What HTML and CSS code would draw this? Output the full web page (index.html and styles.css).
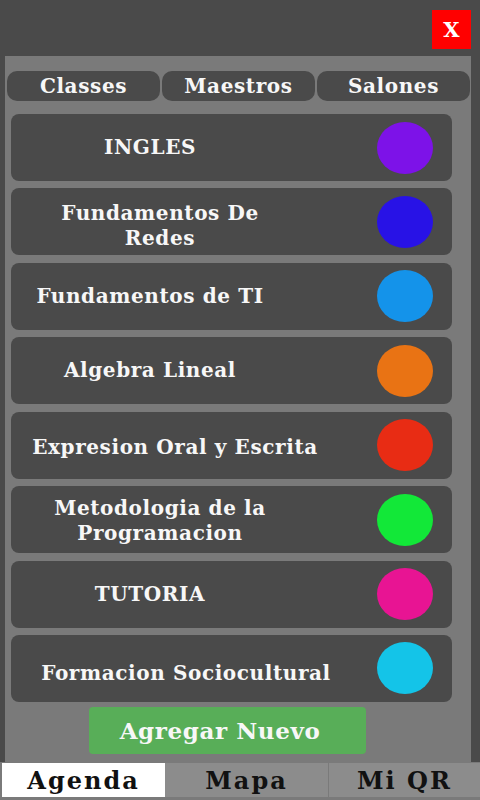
FILE: index.html
```html
<!DOCTYPE html>
<html>
<head>
<meta charset="utf-8">
<link rel="stylesheet" href="styles.css">
</head>
<body>
<div class="app">
  <div class="topbar">
    <div class="close">X</div>
  </div>
  <div class="panel">
    <div class="tabs">
      <div class="tab">Classes</div>
      <div class="tab">Maestros</div>
      <div class="tab">Salones</div>
    </div>
    <div class="list">
      <div class="row"><div class="label">INGLES</div><div class="dot" style="background:#7d12e8"></div></div>
      <div class="row"><div class="label label-2l label-low">Fundamentos De<br>Redes</div><div class="dot" style="background:#2812e6"></div></div>
      <div class="row"><div class="label">Fundamentos de TI</div><div class="dot" style="background:#1493ea"></div></div>
      <div class="row"><div class="label">Algebra Lineal</div><div class="dot" style="background:#e97314"></div></div>
      <div class="row"><div class="label label-wide1">Expresion Oral y Escrita</div><div class="dot" style="background:#e82c14"></div></div>
      <div class="row"><div class="label label-2l">Metodologia de la<br>Programacion</div><div class="dot" style="background:#12e838"></div></div>
      <div class="row"><div class="label">TUTORIA</div><div class="dot" style="background:#e81493"></div></div>
      <div class="row"><div class="label label-wide2">Formacion Sociocultural</div><div class="dot" style="background:#14c4e8"></div></div>
    </div>
    <div class="addwrap"><div class="add">Agregar Nuevo</div></div>
  </div>
  <div class="nav">
    <div class="navitem active">Agenda</div>
    <div class="navitem">Mapa</div>
    <div class="navitem">Mi QR</div>
  </div>
</div>
</body>
</html>
```
FILE: styles.css
```css
html, body {
  margin: 0;
  padding: 0;
  background: #4a4a4a;
}
body {
  font-family: "DejaVu Serif", "Liberation Serif", serif;
  font-weight: bold;
  color: #f7f7f7;
}
.app {
  width: 480px;
  height: 800px;
  display: flex;
  flex-direction: column;
}
.topbar {
  height: 56px;
  display: flex;
  justify-content: flex-end;
  align-items: flex-start;
  padding-right: 9px;
  box-sizing: border-box;
}
.close {
  margin-top: 10px;
  width: 39px;
  height: 39px;
  background: #ff0000;
  color: #fff;
  font-size: 21px;
  display: flex;
  align-items: center;
  justify-content: center;
}
.panel {
  margin-left: 5px;
  width: 466px;
  height: 706px;
  background: #7a7a7a;
  box-sizing: border-box;
  padding-top: 15px;
  display: flex;
  flex-direction: column;
}
.tabs {
  display: flex;
  gap: 2px;
  padding: 0 1px 0 2px;
  height: 30px;
}
.tab {
  flex: 1;
  background: #4a4a4a;
  border-radius: 10px;
  font-size: 20px;
  letter-spacing: 0.6px;
  display: flex;
  align-items: center;
  justify-content: center;
}
.list {
  margin-top: 13px;
  padding-left: 6px;
  width: 441px;
  display: flex;
  flex-direction: column;
  gap: 7.43px;
}
.row {
  height: 67px;
  background: #4a4a4a;
  border-radius: 8px;
  display: flex;
  align-items: center;
}
.label {
  width: 278px;
  flex: none;
  text-align: center;
  font-size: 20px;
  letter-spacing: 0.6px;
  white-space: nowrap;
  line-height: 25px;
}
.label-2l { margin-left: 10px; padding-top: 2px; }
.label-low { padding-top: 9px; }
.label-wide1 { width: 286px; margin-left: 21px; padding-top: 5px; }
.label-wide2 { width: 290px; margin-left: 30px; padding-top: 10px; }
.dot {
  margin-left: auto;
  margin-right: 19px;
  width: 56px;
  height: 52px;
  border-radius: 50%;
}
.addwrap {
  margin-top: 5px;
  padding-left: 84px;
}
.add {
  width: 277px;
  height: 47px;
  box-sizing: border-box;
  padding-right: 15px;
  background: #58ae58;
  border-radius: 4px;
  font-size: 23px;
  letter-spacing: 0.6px;
  display: flex;
  align-items: center;
  justify-content: center;
}
.nav {
  height: 38px;
  background: #7a7a7a;
  display: flex;
  padding: 1px 0 3px 2px;
  box-sizing: border-box;
  gap: 1px;
}
.navitem {
  background: #8c8c8c;
  color: #111;
  font-size: 24px;
  letter-spacing: 2px;
  display: flex;
  align-items: center;
  justify-content: center;
  flex: 0 0 163px;
}
.navitem.active {
  background: #ffffff;
  margin-right: -1px;
}
.navitem:last-child { flex: 1; }
```
